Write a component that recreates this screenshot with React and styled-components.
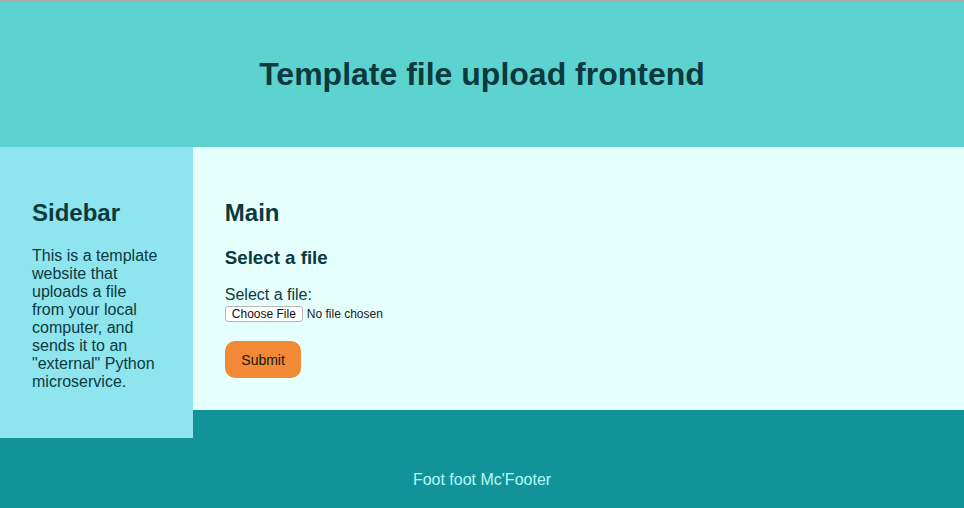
import React from 'react';
import styled, { createGlobalStyle } from 'styled-components';

const GlobalStyle = createGlobalStyle`
  html, body {
    margin: 0;
    padding: 0;
  }
  body {
    font-family: "Liberation Sans", Arial, Helvetica, sans-serif;
    color: #0b3a3e;
    background: #12939a;
  }
`;

const Page = styled.div`
  width: 100%;
  min-height: 508px;
  background: #12939a;
`;

const Header = styled.header`
  height: 145px;
  border-top: 2px solid #a9abab;
  background: #5dd3cf;
  display: flex;
  align-items: center;
  justify-content: center;

  h1 {
    margin: 0;
    font-size: 32px;
    font-weight: bold;
    color: #0b3a3e;
  }
`;

const Sidebar = styled.aside`
  float: left;
  width: 20%;
  box-sizing: border-box;
  padding: 32px;
  padding-bottom: 31px;
  background: #8fe5ee;

  h2 {
    margin: 19.92px 0;
    font-size: 24px;
  }
  p {
    margin: 16px 0;
    font-size: 16px;
    line-height: 18px;
  }
`;

const Main = styled.main`
  margin-left: 20%;
  padding: 32px;
  background: #e5fffc;

  h2 {
    margin: 19.92px 0;
    font-size: 24px;
  }
  h3 {
    margin: 18.72px 0 16.72px;
    font-size: 18.72px;
  }
`;

const Form = styled.form`
  display: flex;
  flex-direction: column;
  align-items: flex-start;
  margin: 0;
`;

const Label = styled.label`
  font-size: 16px;
  line-height: 18px;
  color: #0b3a3e;
`;

const FileInput = styled.input`
  margin: 2px 0 0;
  font-family: "Liberation Sans", Arial, sans-serif;
  font-size: 12px;
  color: #1a1a1a;

  &::file-selector-button {
    font-family: "Liberation Sans", Arial, sans-serif;
    font-size: 12px;
    height: 16px;
    padding: 0 6px;
    margin-right: 4px;
    background: #fff;
    border: 1px solid #b5b5b5;
    border-radius: 3px;
    color: #111;
  }
`;

const SubmitButton = styled.button`
  margin-top: 19px;
  padding: 1px 16.5px 0;
  height: 37px;
  border: none;
  border-radius: 10px;
  background: #f28934;
  color: #161616;
  font-family: "Liberation Sans", Arial, sans-serif;
  font-size: 14px;
`;

const Footer = styled.footer`
  height: 98px;
  box-sizing: border-box;
  padding-top: 61px;
  background: #12939a;
  text-align: center;
  color: #b1fdf8;
  font-size: 16px;
  line-height: 18px;
`;

export default function App() {
  return (
    <Page>
      <GlobalStyle />
      <Header>
        <h1>Template file upload frontend</h1>
      </Header>
      <Sidebar>
        <h2>Sidebar</h2>
        <p>
          This is a template website that uploads a file from your local computer, and
          sends it to an "external" Python microservice.
        </p>
      </Sidebar>
      <Main>
        <h2>Main</h2>
        <h3>Select a file</h3>
        <Form onSubmit={(e) => e.preventDefault()}>
          <Label htmlFor="file">Select a file:</Label>
          <FileInput id="file" type="file" />
          <SubmitButton type="submit">Submit</SubmitButton>
        </Form>
      </Main>
      <Footer>Foot foot Mc'Footer</Footer>
    </Page>
  );
}
